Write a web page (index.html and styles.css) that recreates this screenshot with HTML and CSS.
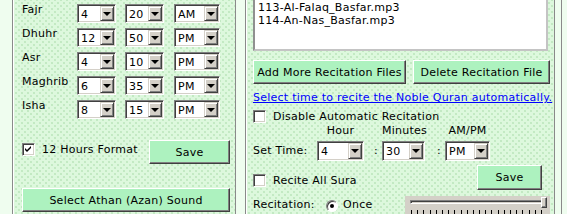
FILE: index.html
```html
<!DOCTYPE html>
<html>
<head>
  <title>Athan Times</title>
  <link rel="stylesheet" href="styles.css">
</head>
<body>
  <div class="frame">
    <div class="panel times">
      <div class="time-row">
        <span class="name">Fajr</span>
        <div class="combo c-hour"><span>4</span><i class="drop"></i></div>
        <div class="combo c-min"><span>20</span><i class="drop"></i></div>
        <div class="combo c-ampm"><span>AM</span><i class="drop"></i></div>
      </div>
      <div class="time-row">
        <span class="name">Dhuhr</span>
        <div class="combo c-hour"><span>12</span><i class="drop"></i></div>
        <div class="combo c-min"><span>50</span><i class="drop"></i></div>
        <div class="combo c-ampm"><span>PM</span><i class="drop"></i></div>
      </div>
      <div class="time-row">
        <span class="name">Asr</span>
        <div class="combo c-hour"><span>4</span><i class="drop"></i></div>
        <div class="combo c-min"><span>10</span><i class="drop"></i></div>
        <div class="combo c-ampm"><span>PM</span><i class="drop"></i></div>
      </div>
      <div class="time-row">
        <span class="name">Maghrib</span>
        <div class="combo c-hour"><span>6</span><i class="drop"></i></div>
        <div class="combo c-min"><span>35</span><i class="drop"></i></div>
        <div class="combo c-ampm"><span>PM</span><i class="drop"></i></div>
      </div>
      <div class="time-row">
        <span class="name">Isha</span>
        <div class="combo c-hour"><span>8</span><i class="drop"></i></div>
        <div class="combo c-min"><span>15</span><i class="drop"></i></div>
        <div class="combo c-ampm"><span>PM</span><i class="drop"></i></div>
      </div>

      <div class="format-row">
        <label class="check">
          <span class="box">
            <svg width="7" height="7" viewBox="0 0 7 7"><path d="M0 2 L2 4 L6 0 L6 2 L2 6 L0 4 Z" fill="#000"/></svg>
          </span>
          12 Hours Format
        </label>
        <button class="btn save-left">Save</button>
      </div>

      <button class="btn athan">Select Athan (Azan) Sound</button>
    </div>

    <div class="panel recite">
      <div class="listbox">
        <div>113-Al-Falaq_Basfar.mp3</div>
        <div>114-An-Nas_Basfar.mp3</div>
      </div>

      <div class="file-buttons">
        <button class="btn add">Add More Recitation Files</button>
        <button class="btn del">Delete Recitation File</button>
      </div>

      <a class="link" href="#">Select time to recite the Noble Quran automatically.</a>

      <label class="check disable"><span class="box"></span>Disable Automatic Recitation</label>

      <div class="set-time">
        <span></span>
        <span class="head">Hour</span>
        <span></span>
        <span class="head">Minutes</span>
        <span></span>
        <span class="head">AM/PM</span>

        <span class="lbl">Set Time:</span>
        <div class="combo"><span>4</span><i class="drop"></i></div>
        <span class="colon">:</span>
        <div class="combo"><span>30</span><i class="drop"></i></div>
        <span class="colon">:</span>
        <div class="combo"><span>PM</span><i class="drop"></i></div>
      </div>

      <div class="sura-row">
        <label class="check"><span class="box"></span>Recite All Sura</label>
        <button class="btn save-right">Save</button>
      </div>

      <div class="repeat-row">
        <span class="lbl">Recitation:</span>
        <span class="radio"></span>
        <span class="once">Once</span>
        <div class="slider">
          <div class="track"></div>
          <div class="thumb"></div>
          <div class="ticks"></div>
        </div>
      </div>
    </div>
  </div>
</body>
</html>
```

FILE: styles.css
```css
body {
  margin: 0;
  height: 214px;
  overflow: hidden;
  background-color: #effdef;
  font-family: "DejaVu Sans", Verdana, sans-serif;
  font-size: 11px;
  line-height: 13px;
  letter-spacing: 0.25px;
  color: #000;
}

.frame {
  display: flex;
  align-items: flex-start;
  width: 562px;
  height: 240px;
  padding-left: 12px;
  box-sizing: border-box;
  border-right: 1px solid #8a8a8a;
}

.panel {
  height: 240px;
  box-sizing: border-box;
  border-left: 1px solid #8a8a8a;
  border-right: 1px solid #8a8a8a;
  box-shadow: inset 1px 0 #fff;
  background-color: #ddf8dd;
  background-image:
    radial-gradient(circle, #c3e9c3 0.7px, transparent 1px),
    radial-gradient(circle, #c3e9c3 0.7px, transparent 1px);
  background-size: 6px 6px;
  background-position: 0 0, 3px 3px;
}

/* left: prayer times */
.times {
  width: 224px;
  padding-left: 9px;
}

.time-row {
  display: flex;
  align-items: flex-start;
  height: 24px;
}

.name {
  width: 55px;
  padding-top: 3px;
}

.combo {
  display: flex;
  height: 19px;
  margin-top: 4px;
  box-sizing: border-box;
  background: #fff;
  border-top: 1px solid #808080;
  border-left: 1px solid #808080;
  border-bottom: 1px solid #fff;
  border-right: 1px solid #fff;
  box-shadow: inset 1px 1px #404040, inset -1px -1px #d4d0c8;
  padding: 1px;
}

.combo span {
  flex: 1;
  padding: 2px 0 0 2px;
}

.drop {
  position: relative;
  width: 14px;
  box-sizing: border-box;
  background: #d4d0c8;
  border-top: 1px solid #d4d0c8;
  border-left: 1px solid #d4d0c8;
  border-bottom: 1px solid #404040;
  border-right: 1px solid #404040;
  box-shadow: inset 1px 1px #fff, inset -1px -1px #808080;
}

.drop::after {
  content: "";
  position: absolute;
  left: 2px;
  top: 5px;
  border-left: 4px solid transparent;
  border-right: 4px solid transparent;
  border-top: 4px solid #000;
}

.c-hour { width: 39px; }
.c-min { width: 39px; margin-left: 9px; }
.c-ampm { width: 46px; margin-left: 10px; }

.format-row {
  display: flex;
  justify-content: space-between;
  align-items: flex-start;
  width: 208px;
  margin-top: 20px;
}

.check {
  display: flex;
  align-items: center;
  gap: 7px;
}

.format-row .check {
  margin-top: 3px;
}

.box {
  display: flex;
  align-items: center;
  justify-content: center;
  width: 13px;
  height: 13px;
  box-sizing: border-box;
  background: #fff;
  border-top: 1px solid #808080;
  border-left: 1px solid #808080;
  border-bottom: 1px solid #fff;
  border-right: 1px solid #fff;
  box-shadow: inset 1px 1px #404040, inset -1px -1px #d4d0c8;
}

.btn {
  display: block;
  height: 24px;
  padding: 0;
  font-family: inherit;
  font-size: 11px;
  letter-spacing: 0.25px;
  color: #000;
  background: #adf2bf;
  border-top: 1px solid #fff;
  border-left: 1px solid #fff;
  border-bottom: 1px solid #404040;
  border-right: 1px solid #404040;
  box-shadow: inset -1px -1px #808080;
}

.save-left { width: 81px; }

.athan {
  width: 208px;
  margin-top: 24px;
}

/* right: recitation */
.recite {
  width: 310px;
  margin-left: 9px;
  padding-left: 7px;
}

.listbox {
  width: 295px;
  height: 68px;
  margin-top: -17px;
  box-sizing: border-box;
  padding: 16px 0 0 3px;
  background: #fff;
  border: 2px solid #c4c4c4;
  border-top-color: #909090;
  border-left-color: #909090;
}

.file-buttons {
  display: flex;
  gap: 7px;
  margin-top: 9px;
}

.add { width: 153px; }
.del { width: 137px; }

.link {
  display: block;
  margin-top: 7px;
  color: #0000ff;
}

.disable {
  margin-top: 6px;
}

.set-time {
  display: grid;
  grid-template-columns: 64px 47px 18px 43px 20px 45px;
  row-gap: 4px;
  margin-top: 1px;
}

.head {
  text-align: center;
}

.set-time .lbl {
  padding-top: 3px;
}

.set-time .combo {
  margin-top: 0;
  height: 20px;
}

.colon {
  padding-top: 3px;
  padding-right: 4px;
  text-align: right;
}

.sura-row {
  display: flex;
  justify-content: space-between;
  align-items: flex-start;
  width: 289px;
  margin-top: 4px;
}

.sura-row .check {
  margin-top: 9px;
}

.save-right {
  width: 65px;
  height: 25px;
}

.repeat-row {
  display: flex;
  align-items: flex-start;
  margin-top: 7px;
}

.repeat-row .lbl {
  width: 73px;
  padding-top: 1px;
}

.radio {
  position: relative;
  width: 12px;
  height: 12px;
  margin-top: 3px;
  box-sizing: border-box;
  border-radius: 50%;
  background: #fff;
  border: 1px solid;
  border-color: #808080 #fff #fff #808080;
  box-shadow: inset 1px 1px #404040;
}

.radio::after {
  content: "";
  position: absolute;
  left: 3px;
  top: 3px;
  width: 4px;
  height: 4px;
  border-radius: 50%;
  background: #000;
}

.once {
  width: 62px;
  margin-left: 5px;
  padding-top: 1px;
}

.slider {
  position: relative;
  width: 145px;
  height: 24px;
  margin-top: -1px;
  background: #d4d0c8;
}

.track {
  position: absolute;
  left: 5px;
  top: 4px;
  width: 134px;
  height: 4px;
  box-sizing: border-box;
  border-top: 1px solid #808080;
  border-left: 1px solid #808080;
  border-bottom: 1px solid #fff;
  border-right: 1px solid #fff;
  box-shadow: inset 1px 1px #404040;
}

.thumb {
  position: absolute;
  left: 136px;
  top: 1px;
  width: 6px;
  height: 11px;
  box-sizing: border-box;
  background: #d4d0c8;
  border-top: 1px solid #fff;
  border-left: 1px solid #fff;
  border-bottom: 1px solid #404040;
  border-right: 1px solid #404040;
  box-shadow: inset -1px -1px #808080;
}

.ticks {
  position: absolute;
  left: 6px;
  top: 14px;
  width: 132px;
  height: 4px;
  background: repeating-linear-gradient(to right, #000 0, #000 1px, transparent 1px, transparent 6.19px);
}
```
